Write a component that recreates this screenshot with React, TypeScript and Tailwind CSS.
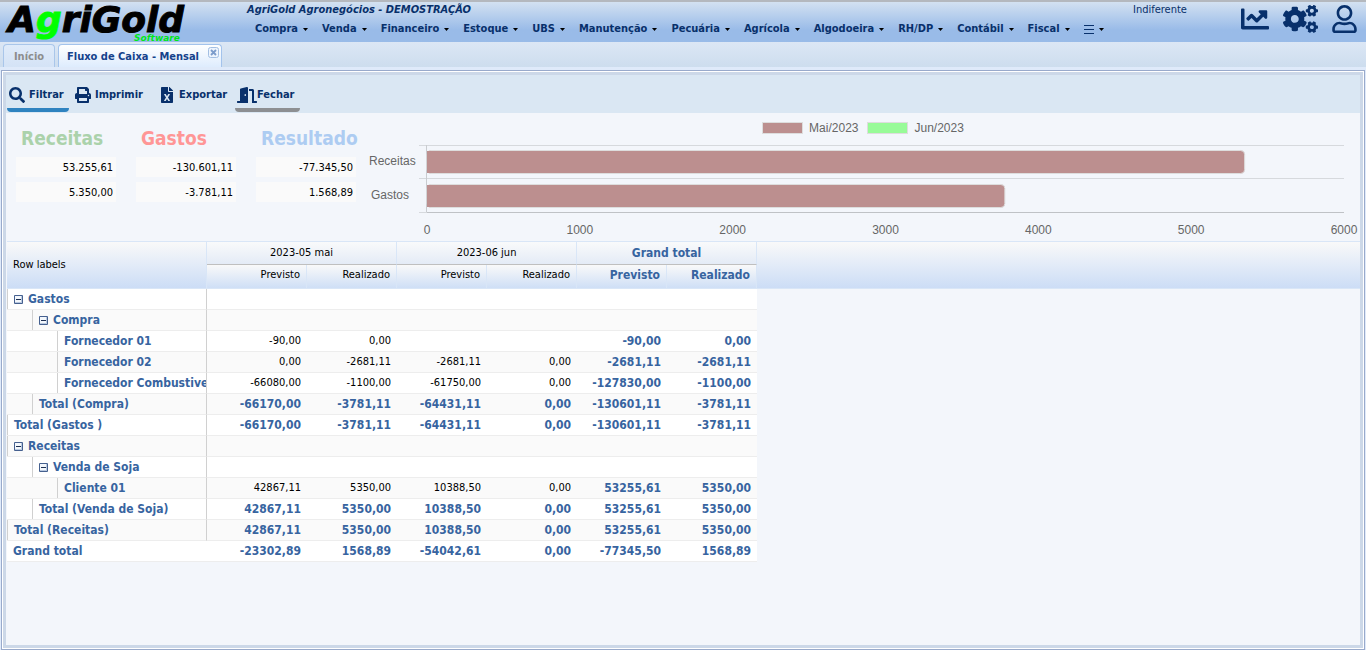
import React from "react";
import { FaChartLine, FaCogs, FaDoorOpen, FaFileExcel, FaPrint, FaRegUser, FaSearch } from "react-icons/fa";

const menus = [
  "Compra", "Venda", "Financeiro", "Estoque", "UBS", "Manutenção", "Pecuária",
  "Agrícola", "Algodoeira", "RH/DP", "Contábil", "Fiscal", "☰",
];

const summary = [
  { title: "Receitas", color: "text-[#abd2ab]", values: ["53.255,61", "5.350,00"] },
  { title: "Gastos", color: "text-[#ff9696]", values: ["-130.601,11", "-3.781,11"] },
  { title: "Resultado", color: "text-[#adccf2]", values: ["-77.345,50", "1.568,89"] },
];

type Row = { label: string; level: number; group?: boolean; total?: boolean; grand?: boolean; values: string[] };

const none = ["", "", "", "", "", ""];
const rows: Row[] = [
  { label: "Gastos", level: 0, group: true, values: none },
  { label: "Compra", level: 1, group: true, values: none },
  { label: "Fornecedor 01", level: 2, values: ["-90,00", "0,00", "", "", "-90,00", "0,00"] },
  { label: "Fornecedor 02", level: 2, values: ["0,00", "-2681,11", "-2681,11", "0,00", "-2681,11", "-2681,11"] },
  { label: "Fornecedor Combustivel", level: 2, values: ["-66080,00", "-1100,00", "-61750,00", "0,00", "-127830,00", "-1100,00"] },
  { label: "Total (Compra)", level: 1, total: true, values: ["-66170,00", "-3781,11", "-64431,11", "0,00", "-130601,11", "-3781,11"] },
  { label: "Total (Gastos )", level: 0, total: true, values: ["-66170,00", "-3781,11", "-64431,11", "0,00", "-130601,11", "-3781,11"] },
  { label: "Receitas", level: 0, group: true, values: none },
  { label: "Venda de Soja", level: 1, group: true, values: none },
  { label: "Cliente 01", level: 2, values: ["42867,11", "5350,00", "10388,50", "0,00", "53255,61", "5350,00"] },
  { label: "Total (Venda de Soja)", level: 1, total: true, values: ["42867,11", "5350,00", "10388,50", "0,00", "53255,61", "5350,00"] },
  { label: "Total (Receitas)", level: 0, total: true, values: ["42867,11", "5350,00", "10388,50", "0,00", "53255,61", "5350,00"] },
  { label: "Grand total", level: 0, total: true, grand: true, values: ["-23302,89", "1568,89", "-54042,61", "0,00", "-77345,50", "1568,89"] },
];

const indents = ["", "pl-[25px]", "pl-[50px]"];

function Logo() {
  return (
    <svg viewBox="0 0 240 40" className="h-10 w-60 shrink-0 overflow-visible" role="img" aria-label="AgriGold Software">
      <g fontFamily='"DejaVu Sans", sans-serif' fontWeight="700" fontStyle="italic">
        <text x="8" y="30" fontSize="36" fill="#000" stroke="#000" strokeWidth="1">
          A<tspan fill="#00ff00" stroke="#00ff00">g</tspan>riGold
        </text>
        <text x="134" y="39" fontSize="9" fill="#00e81a">Software</text>
      </g>
    </svg>
  );
}

function Header() {
  return (
    <header className="flex h-[42px] items-start border-t-2 border-[#b4b8be] bg-linear-to-b from-[#d3e1f1] from-0% to-[#99bbe8] to-70% text-[#08306b]">
      <Logo />
      <div className="flex min-w-0 grow flex-col pl-[7px]">
        <div className="flex h-4 items-center justify-between">
          <h1 className="text-[11px] leading-[14px] font-bold italic">AgriGold Agronegócios - DEMOSTRAÇÃO</h1>
          <span className="w-[108px] text-[11px] leading-[14px]">Indiferente</span>
        </div>
        <nav className="flex items-center gap-3.5 pt-1 pl-2">
          {menus.map((m) => (
            <button key={m} type="button" aria-label={m === "☰" ? "Mais" : m} className="flex items-center gap-[5px] text-[11px] leading-[14px] font-bold whitespace-nowrap">
              {m === "☰" ? (
                <svg viewBox="0 0 10 9" className="h-[9px] w-[10px]"><path d="M0 .5h10M0 4.500h10M0 8.500h10" stroke="#08306b" /></svg>
              ) : m}
              <svg viewBox="0 0 5 3" className="h-[3px] w-[5px]"><path d="M0 0h5L2.500 3z" fill="#000" /></svg>
            </button>
          ))}
        </nav>
      </div>
      <div className="flex shrink-0 items-center gap-3.5 pt-[3px] pr-[9px]">
        <button type="button" aria-label="Gráficos"><FaChartLine className="h-7 w-7" /></button>
        <button type="button" aria-label="Configurações"><FaCogs className="h-7 w-[35px]" /></button>
        <button type="button" aria-label="Usuário"><FaRegUser className="h-7 w-[25px]" /></button>
      </div>
    </header>
  );
}

function Tabs() {
  return (
    <div className="flex h-[25px] items-end gap-[3px] bg-linear-to-b from-[#dce7f5] to-[#cdddee] pl-[3px] text-[11px] leading-[14px] font-bold">
      <button type="button" className="flex h-[23px] w-[52px] items-center justify-center rounded-t border border-b-0 border-[#a9c6ea] bg-linear-to-b from-[#dfebfa] to-[#d4e3f6] pt-[2px] text-[#8d8d8d]">Início</button>
      <div className="relative flex h-[23px] w-[164px] items-center rounded-t border border-b-0 border-[#a3c3ec] bg-linear-to-b from-white to-[#deecfd] pt-[2px] pl-2">
        <button type="button" className="text-[#15428b] whitespace-nowrap">Fluxo de Caixa - Mensal</button>
        <button type="button" aria-label="Fechar aba" className="absolute top-[2px] right-[2px]">
          <svg viewBox="0 0 11 11" className="size-[11px]">
            <rect x=".5" y=".5" width="10" height="10" rx="2" fill="#edf4fd" stroke="#a3bfe3" />
            <path d="M3 3l5 5M8 3L3 8" stroke="#7c9ccb" strokeWidth="1.800" />
          </svg>
        </button>
      </div>
    </div>
  );
}

function Toolbar() {
  const button = "flex h-[34px] items-center rounded-b-sm border-b-4 pt-1";
  return (
    <div className="flex h-[38px] items-start gap-[6px] bg-[#dae7f3] pt-[3px] pl-px text-[11px] leading-[14px] font-bold text-[#08306b]">
      <button type="button" className={`${button} w-[62px] gap-1 border-[#2f83c0] pl-[2px]`}><FaSearch className="size-4 shrink-0" />Filtrar</button>
      <button type="button" className={`${button} w-[78px] gap-1 border-transparent`}><FaPrint className="size-4 shrink-0" />Imprimir</button>
      <button type="button" className={`${button} w-[70px] gap-1 border-transparent`}><FaFileExcel className="size-4 shrink-0" />Exportar</button>
      <button type="button" className={`${button} w-[65px] border-[#8d8f92] pl-[2px]`}><FaDoorOpen className="h-4 w-5 shrink-0" />Fechar</button>
    </div>
  );
}

function Summary() {
  return (
    <div className="flex shrink-0 gap-5 pt-3.5 pl-[10px]">
      {summary.map((s) => (
        <section key={s.title} className="flex w-[100px] flex-col gap-[5px]">
          <h2 className={`h-[25px] pl-[5px] text-[19px] leading-[22px] font-bold ${s.color}`}>{s.title}</h2>
          {s.values.map((v) => (
            <p key={v} className="h-5 bg-[#fafafa] pt-px pr-[3px] text-right text-[11px] leading-5 text-black">{v}</p>
          ))}
        </section>
      ))}
    </div>
  );
}

function Chart() {
  const max = 6000;
  const bars = [{ y: 25, value: 5350 }, { y: 59, value: 3781 }];
  return (
    <div className="flex min-w-0 grow flex-col pl-[10px] font-['Liberation_Sans',sans-serif] text-[12px] text-[#666]">
      <div className="flex h-[26px] items-end justify-center gap-[9px] pb-1 leading-[14px]">
        <span className="flex items-center gap-[6px]"><i className="h-3 w-[41px] border border-[#ddd] bg-[#bc8f8f]" />Mai/2023</span>
        <span className="flex items-center gap-[6px]"><i className="h-3 w-[41px] border border-[#ddd] bg-[#98fb98]" />Jun/2023</span>
      </div>
      <div className="flex">
        <div className="flex w-[61px] shrink-0 flex-col pt-[5px] pl-[3px] leading-[34px]">
          <span>Receitas</span>
          <span className="pl-[2px]">Gastos</span>
        </div>
        <div className="grow pr-4">
          <svg width="100%" height="102" className="block overflow-visible" role="img" aria-label="Receitas e Gastos de Mai/2023 e Jun/2023">
            <svg x="-8" width="8" height="102" overflow="visible" stroke="#d6d9dd">
              <path d="M0 6.500h8M0 39.500h8M0 73.500h8" />
            </svg>
            <line x1="0" x2="100%" y1="6.500" y2="6.500" stroke="#d6d9dd" />
            <line x1="0" x2="100%" y1="39.500" y2="39.500" stroke="#d6d9dd" />
            <line x1="0" x2="100%" y1="73.500" y2="73.500" stroke="#bfc2c6" />
            <line x1="-.5" x2="-.5" y1="6" y2="73" stroke="#c9ccd0" />
            {bars.map((b, i) => (
              <g key={b.y}>
                <rect x="0" y={11.5 + i * 34} width={`${(b.value / max) * 100}%`} height="23" rx="4" fill="#bc8f8f" stroke="#ddd" />
                <rect x="0" y={12 + i * 34} width="8" height="22" fill="#bc8f8f" />
              </g>
            ))}
            {[0, 1000, 2000, 3000, 4000, 5000, 6000].map((t) => (
              <text key={t} x={`${(t / max) * 100}%`} y="95" textAnchor="middle" fill="#666">{t}</text>
            ))}
          </svg>
        </div>
      </div>
    </div>
  );
}

function Toggle({ label }: { label: string }) {
  return (
    <button type="button" aria-label={`Recolher ${label}`} className="mr-[5px] shrink-0">
      <svg viewBox="0 0 9 9" className="block size-[9px]">
        <rect width="9" height="9" rx="1" fill="#45608f" />
        <rect x="1" y="1" width="7" height="7" fill="#b9c9e0" />
        <rect x="1" y="1" width="6" height="6" fill="#f3f7fc" />
        <path d="M2 4.500h5" stroke="#1d2f52" />
      </svg>
    </button>
  );
}

function Pivot() {
  const grand = "text-[12px] font-bold text-[#3764a0]";
  const top = "h-6 border-t border-r border-b border-t-[#d9e6f7] border-r-[#d9e6f7] border-b-[#bfbfbf] bg-linear-to-b from-[#f9fafb] to-[#e4ebf6] p-0";
  const sub = "h-6 border-r border-b border-[#d9e6f7] bg-linear-to-b from-[#f9f9f9] to-[#cfdff6] pt-0 pb-[3px] pr-[6px] text-right";
  const tall = "border-t border-b border-[#d9e6f7] bg-linear-to-b from-[#f9f9f9] to-[#ccddf6] p-0";
  return (
    <div className="pl-px">
      <table className="w-full table-fixed border-separate border-spacing-0 text-[11px] leading-[14px] text-black">
        <colgroup>
          <col className="w-[200px]" />
          <col className="w-[100px]" />
          {[0, 1, 2, 3, 4].map((i) => <col key={i} className="w-[90px]" />)}
          <col />
        </colgroup>
        <thead>
          <tr>
            <th rowSpan={2} className={`${tall} border-r text-left font-normal`}><span className="pl-[6px]">Row labels</span></th>
            <th colSpan={2} className={`${top} font-normal`}>2023-05 mai</th>
            <th colSpan={2} className={`${top} font-normal`}>2023-06 jun</th>
            <th colSpan={2} className={`${top} ${grand}`}>Grand total</th>
            <td rowSpan={2} className={tall} />
          </tr>
          <tr>
            {[0, 1, 2].map((g) => (
              <React.Fragment key={g}>
                <th className={`${sub} ${g === 2 ? grand : "font-normal"}`}>Previsto</th>
                <th className={`${sub} ${g === 2 ? grand : "font-normal"}`}>Realizado</th>
              </React.Fragment>
            ))}
          </tr>
        </thead>
        <tbody>
          {rows.map((r, n) => {
            const bg = n % 2 ? "bg-[#fafafa]" : "bg-white";
            return (
              <tr key={r.label} className="h-[21px]">
                <th className={`${bg} ${indents[r.level]} overflow-hidden border-b border-b-[#ededed] py-0 pr-0 text-left ${r.grand ? "" : "border-r border-r-[#d0d0d0]"} ${grand}`}>
                  <div className={`flex h-5 items-center overflow-hidden whitespace-nowrap ${r.grand ? "pl-[6px]" : "border-l border-[#d0d0d0] pl-[6px]"}`}>
                    {r.group && <Toggle label={r.label} />}
                    {r.label}
                  </div>
                </th>
                {r.values.map((v, i) => (
                  <td key={i} className={`${bg} border-b border-[#ededed] py-0 pr-[6px] pl-0 text-right ${r.total || i > 3 ? grand : ""}`}>{v}</td>
                ))}
                <td className="p-0" />
              </tr>
            );
          })}
        </tbody>
      </table>
    </div>
  );
}

export default function App() {
  return (
    <div className="flex min-h-screen flex-col bg-[#dfeafa] font-['DejaVu_Sans_Condensed','DejaVu_Sans',sans-serif]">
      <Header />
      <Tabs />
      <main className="mx-px mt-[3px] flex grow flex-col border border-[#99aacb] bg-white p-px">
        <div className="flex grow flex-col border-3 border-[#ccd8e8] bg-[#f3f6fb]">
          <Toolbar />
          <div className="flex h-32">
            <Summary />
            <Chart />
          </div>
          <Pivot />
        </div>
      </main>
    </div>
  );
}
